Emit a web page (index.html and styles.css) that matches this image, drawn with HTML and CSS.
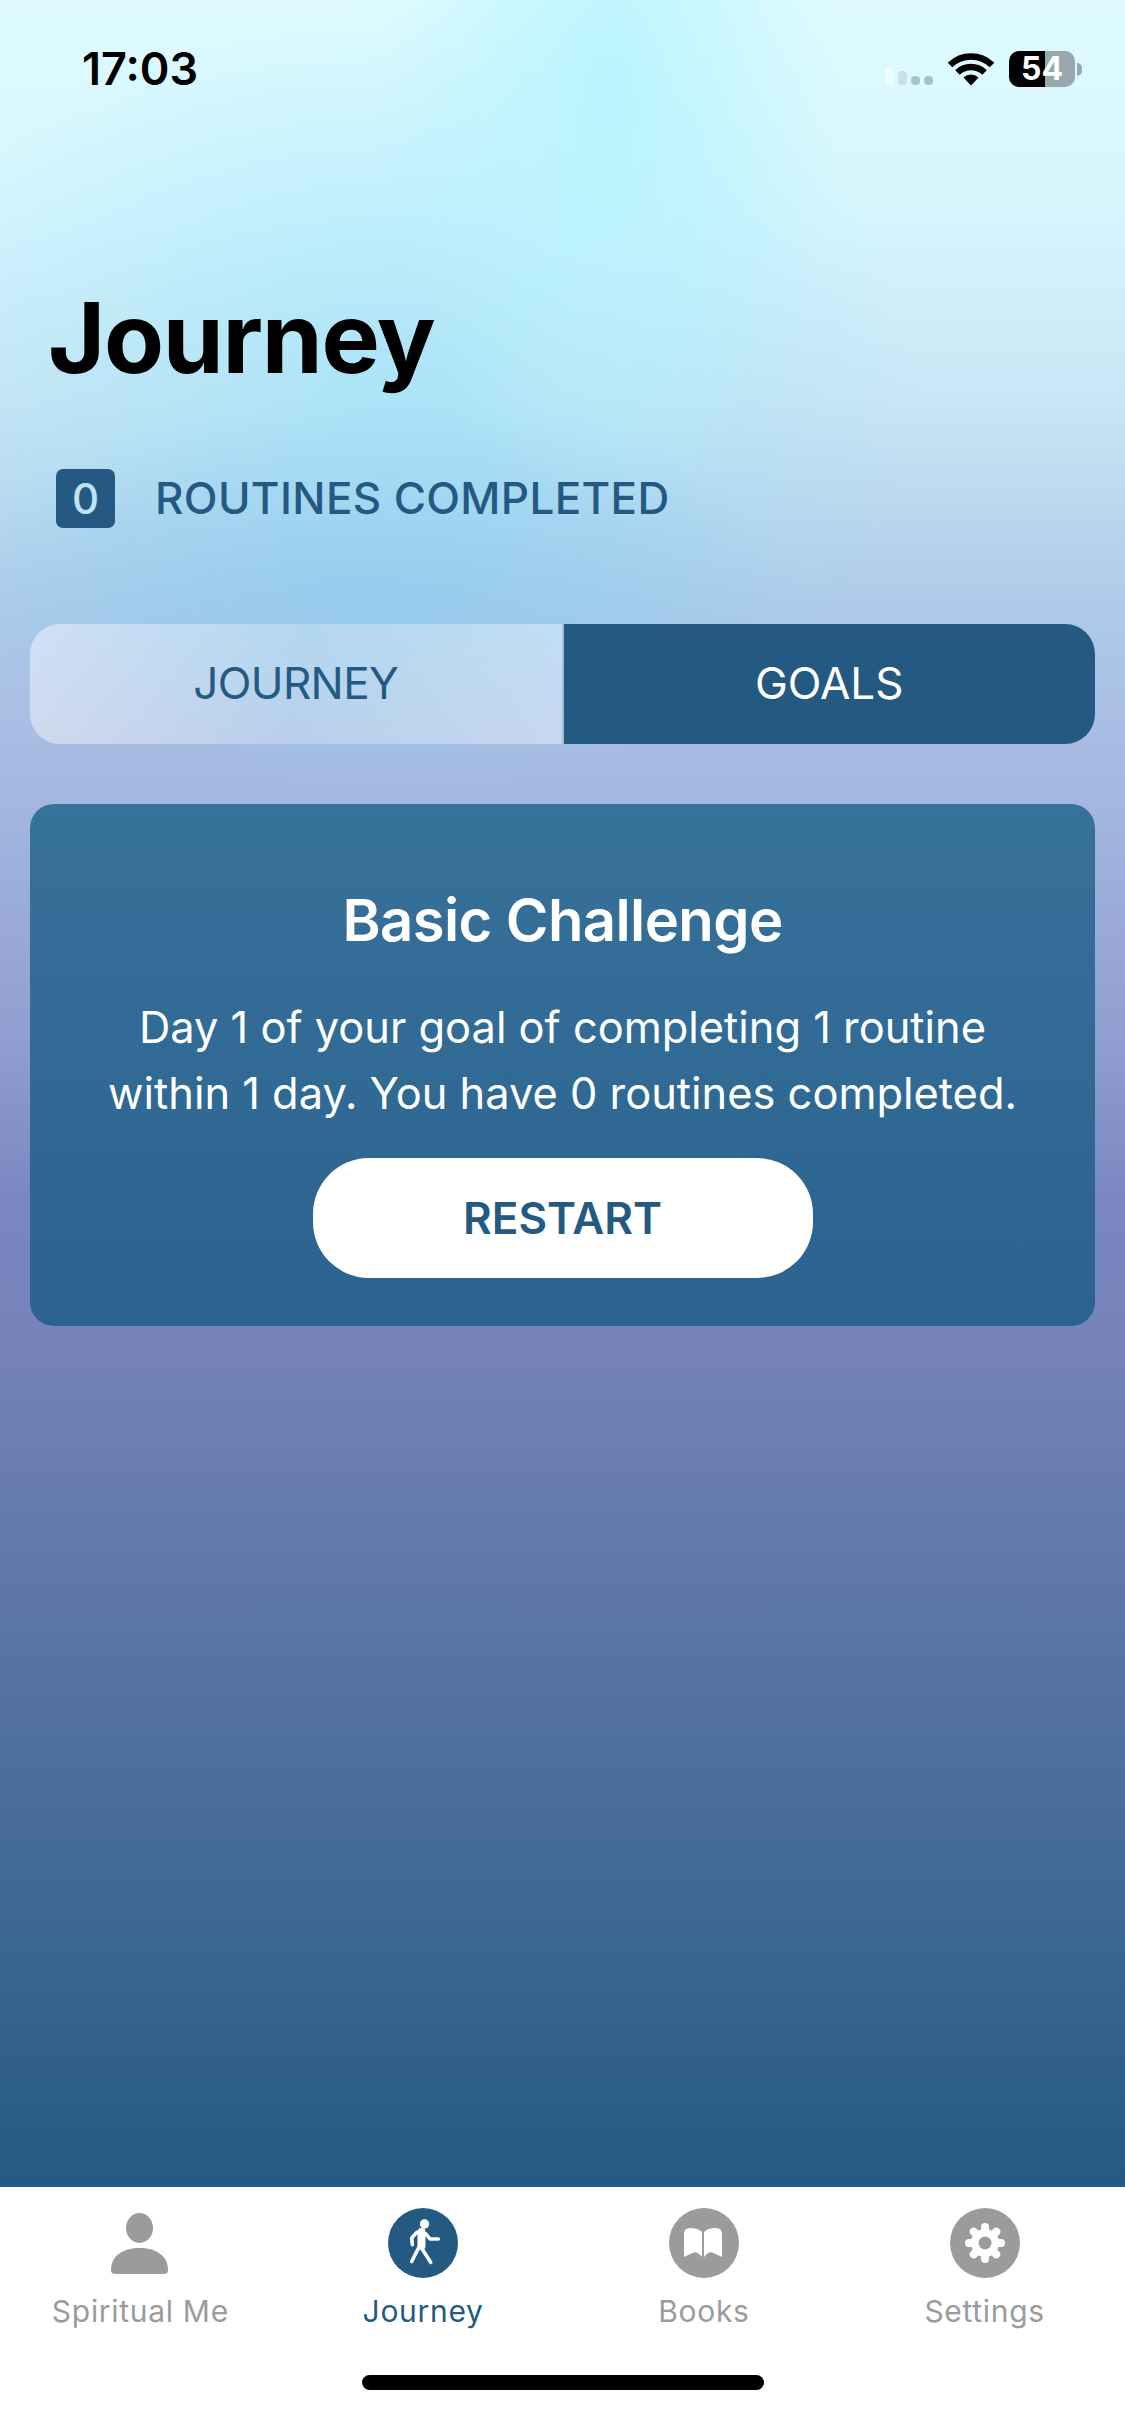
FILE: index.html
```html
<!DOCTYPE html>
<html lang="en">
<head>
<meta charset="utf-8">
<title>Journey</title>
<link rel="stylesheet" href="styles.css">
</head>
<body>
<div class="screen">
  <main class="main">
    <div class="status">
      <span class="time">17:03</span>
      <div class="status-right">
        <div class="signal"><i class="s1"></i><i class="s2"></i><i class="s3"></i><i class="s4"></i></div>
        <svg class="wifi" viewBox="0 0 46 32"><path d="M2 12.5A30 30 0 0 1 44 12.5M9.5 20A19.5 19.5 0 0 1 36.5 20" fill="none" stroke="#000" stroke-width="6.5"/><path d="M15.5 25A11 11 0 0 1 30.5 25L23 33Z" fill="#000"/></svg>
        <div class="battery"><span>54</span></div>
        <div class="nub"></div>
      </div>
    </div>
    <h1 class="title">Journey</h1>
    <div class="count-row">
      <span class="count">0</span>
      <span class="count-label">ROUTINES COMPLETED</span>
    </div>
    <div class="segments">
      <div class="seg seg-off">JOURNEY</div>
      <div class="seg seg-on">GOALS</div>
    </div>
    <section class="card">
      <h2 class="card-title">Basic Challenge</h2>
      <p class="card-text">Day 1 of your goal of completing 1 routine<br>within 1 day. You have 0 routines completed.</p>
      <div class="restart">RESTART</div>
    </section>
  </main>
  <nav class="tabbar">
    <div class="tabs">
      <div class="tab">
        <svg class="icon" viewBox="0 0 70 70"><ellipse cx="34.5" cy="20" rx="13.5" ry="15" fill="#9b9b9b"/><path d="M6 62C6 47 19 40 34.5 40S63 47 63 62Q63 66 59 66H10Q6 66 6 62Z" fill="#9b9b9b"/></svg>
        <span class="tab-label">Spiritual Me</span>
      </div>
      <div class="tab tab-active">
        <svg class="icon" viewBox="0 0 70 70"><circle cx="35" cy="35" r="35" fill="#245a82"/><circle cx="36.5" cy="16" r="4.7" fill="#fff"/><path d="M33.5 24V38" stroke="#fff" stroke-width="8" stroke-linecap="round"/><path d="M32 37L23.7 53.5M31.5 36.7L42.7 54.4M38 26L42 31H50.3M28.7 24.4L23.7 30L24.3 36.7" fill="none" stroke="#fff" stroke-width="3.6" stroke-linecap="round" stroke-linejoin="round"/></svg>
        <span class="tab-label">Journey</span>
      </div>
      <div class="tab">
        <svg class="icon" viewBox="0 0 70 70"><circle cx="35" cy="35" r="35" fill="#9b9b9b"/><path d="M15 26Q15 20 21 20Q29 20 33 24V49Q28 42.5 23.5 45Q19 47 15 49ZM53 26Q53 20 47 20Q39 20 35 24V49Q40 42.5 44.5 45Q49 47 53 49Z" fill="#fff"/></svg>
        <span class="tab-label">Books</span>
      </div>
      <div class="tab">
        <svg class="icon" viewBox="0 0 70 70"><circle cx="35" cy="35" r="35" fill="#9b9b9b"/><path d="M35 19V51M19 35H51M23.7 23.7L46.3 46.3M46.3 23.7L23.7 46.3" stroke="#fff" stroke-width="8" stroke-linecap="round"/><circle cx="35" cy="35" r="14" fill="#fff"/><circle cx="35" cy="35" r="6.5" fill="#9b9b9b"/></svg>
        <span class="tab-label">Settings</span>
      </div>
    </div>
    <div class="home"></div>
  </nav>
</div>
</body>
</html>
```
FILE: styles.css
```css
* { box-sizing: border-box; }
html, body { margin: 0; padding: 0; }
body { width: 1125px; height: 2436px; overflow: hidden; font-family: Inter, "Liberation Sans", sans-serif; }
.screen { width: 1125px; height: 2436px; display: flex; flex-direction: column; background: #fff; }

.main {
  flex: 1;
  padding: 0 30px;
  background:
    radial-gradient(ellipse 230px 420px at 610px 90px, rgba(184,244,254,.95), rgba(184,244,254,0)),
    radial-gradient(ellipse 520px 400px at 400px 400px, rgba(150,225,250,.6), rgba(150,225,250,0)),
    radial-gradient(ellipse 420px 190px at 380px 590px, rgba(130,185,228,.55), rgba(130,185,228,0)),
    linear-gradient(180deg, #dffbff 0, #d4f5fd 220px, #c9e6f4 400px, #aecbe9 600px, #a5b6e0 800px, #8f9dd0 1050px, #7b86c0 1200px, #7683ba 1340px, #245a82 2187px);
}

.status { height: 136px; padding: 0 0 0 52px; display: flex; justify-content: space-between; align-items: flex-start; }
.time { margin-top: 44px; font-size: 45px; line-height: 50px; font-weight: 600; color: #000; letter-spacing: 0; }
.status-right { display: flex; align-items: flex-start; margin-top: 51px; margin-right: 13px; }
.signal { display: flex; align-items: flex-end; gap: 4px; height: 34px; margin-right: 15px; }
.signal i { display: block; width: 9px; border-radius: 4px; }
.s1 { height: 18px; background: rgba(255,255,255,.5); }
.s2 { height: 14px; background: rgba(190,205,215,.6); }
.s3 { height: 9px; background: #a9c1cb; }
.s4 { height: 9px; background: #a9c1cb; }
.wifi { width: 46px; height: 33px; margin-top: 1px; }
.battery {
  width: 66px; height: 36px; margin-left: 15px; border-radius: 10px;
  background: linear-gradient(90deg, #000 36px, #97a8ae 36px);
  display: flex; align-items: center; justify-content: center;
  color: #fff; font-size: 32px; font-weight: 700; line-height: 36px;
}
.nub { width: 5px; height: 13px; margin: 12px 0 0 2px; border-radius: 0 6px 6px 0; background: #97a8ae; }

.title { margin: 142px 0 0 18px; font-size: 98px; line-height: 120px; font-weight: 700; color: #000; letter-spacing: -1.3px; }

.count-row { display: flex; align-items: center; margin: 71px 0 0 26px; }
.count { width: 59px; height: 59px; border-radius: 7px; background: #245a82; color: #bfe3f3; font-size: 42px; line-height: 59px; text-align: center; font-weight: 500; }
.count-label { margin-left: 40px; font-size: 44px; line-height: 59px; font-weight: 500; color: #245a82; letter-spacing: 0.35px; }

.segments { display: flex; height: 120px; margin-top: 96px; border-radius: 30px; overflow: hidden; }
.seg { flex: 1; display: flex; align-items: center; justify-content: center; padding-bottom: 2px; font-size: 44px; font-weight: 400; }
.seg-off { color: #245a82; background: linear-gradient(100deg, rgba(255,255,255,.45), rgba(255,255,255,.25) 50%, rgba(255,255,255,.38)); border-right: 2px solid #a3bdd8; letter-spacing: -0.6px; }
.seg-on { color: #fff; background: #245a82; }

.card {
  margin-top: 60px; height: 522px; padding-top: 81px; border-radius: 24px;
  background: linear-gradient(180deg, #37729a, #2b6290);
  color: #fff; display: flex; flex-direction: column; align-items: center; text-align: center;
}
.card-title { margin: 0; font-size: 58px; line-height: 70px; font-weight: 600; letter-spacing: -0.6px; }
.card-text { margin: 39px 0 0; font-size: 43.4px; line-height: 66px; font-weight: 400; }
.restart { margin-top: 32px; width: 500px; height: 120px; border-radius: 56px; background: #fff; color: #245a82; font-size: 44px; font-weight: 600; line-height: 120px; }

.tabbar { height: 249px; background: #fff; display: flex; flex-direction: column; align-items: center; }
.tabs { display: flex; width: 100%; padding-top: 21px; }
.tab { flex: 1; display: flex; flex-direction: column; align-items: center; color: #9b9b9b; }
.tab-active { color: #245a82; padding-left: 2px; }
.icon { width: 70px; height: 70px; display: block; }
.tab-label { margin-top: 15px; font-size: 30px; line-height: 36px; letter-spacing: 0.7px; }
.home { width: 402px; height: 15px; margin-top: 46px; border-radius: 8px; background: #000; }
```
